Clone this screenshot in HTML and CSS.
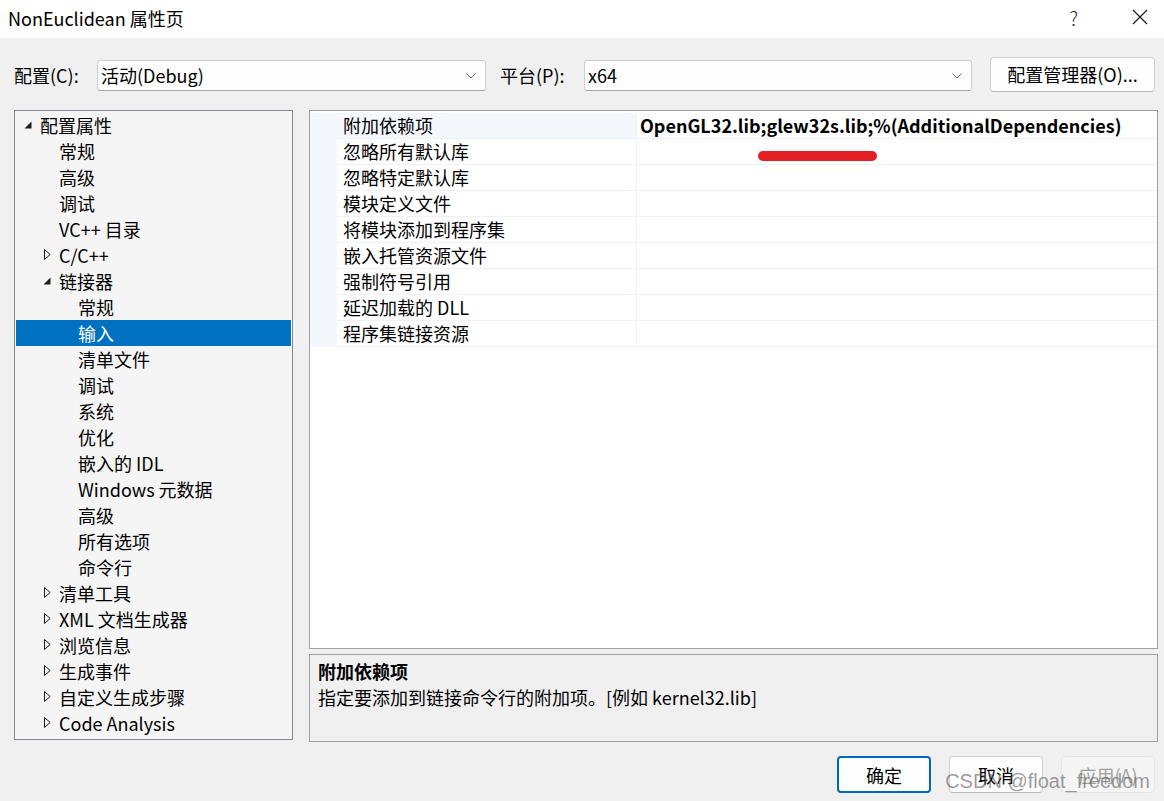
FILE: index.html
```html
<!DOCTYPE html>
<html lang="zh-CN">
<head>
    <meta charset="UTF-8" />
    <meta name="viewport" content="width=device-width, initial-scale=1.0" />
    <title>NonEuclidean 属性页</title>
    <link rel="stylesheet" href="styles.css">
</head>
<body>
    <div class="dialog">
    <!-- TITLE BAR -->
    <div class="titlebar">
        <span class="title">NonEuclidean 属性页</span>
        <div class="title-btns">
        <span class="help">?</span>
        <svg class="close" width="16" height="16" viewBox="0 0 16 16">
            <path d="M1 1 L15 15 M15 1 L1 15" stroke="#1a1a1a" stroke-width="1.2" fill="none" />
        </svg>
        </div>
    </div>

    <!-- CONFIG ROW -->
    <div class="config-row">
        <label class="lbl lbl-config">配置(C):</label>
        <div class="combo combo-config">
        <span>活动(Debug)</span>
        <svg class="chev" width="10" height="6" viewBox="0 0 10 6"><path d="M0.5 0.5 L5 5 L9.5 0.5" stroke="#707070" fill="none" /></svg>
        </div>
        <label class="lbl lbl-platform">平台(P):</label>
        <div class="combo combo-platform">
        <span>x64</span>
        <svg class="chev" width="10" height="6" viewBox="0 0 10 6"><path d="M0.5 0.5 L5 5 L9.5 0.5" stroke="#707070" fill="none" /></svg>
        </div>
        <button class="btn manager">配置管理器(O)...</button>
    </div>

    <!-- MAIN -->
    <div class="main">
        <div class="tree" id="tree"></div>
        <div class="right">
        <div class="grid">
            <div class="grid-rows" id="grid-rows"></div>
            <div class="red-mark"></div>
        </div>
        <div class="desc">
            <div class="desc-title">附加依赖项</div>
            <div class="desc-text">指定要添加到链接命令行的附加项。[例如 kernel32.lib]</div>
        </div>
        </div>
    </div>

    <!-- FOOTER -->
    <div class="footer">
        <button class="btn ok">确定</button>
        <button class="btn">取消</button>
        <button class="btn disabled">应用(A)</button>
        <span class="watermark">CSDN @float_freedom</span>
    </div>
    </div>

    <script>
        // level, arrow (open / closed / none), text
        const treeItems = [
            [0, "open", "配置属性"],
            [1, "", "常规"],
            [1, "", "高级"],
            [1, "", "调试"],
            [1, "", "VC++ 目录"],
            [1, "closed", "C/C++"],
            [1, "open", "链接器"],
            [2, "", "常规"],
            [2, "", "输入", true],
            [2, "", "清单文件"],
            [2, "", "调试"],
            [2, "", "系统"],
            [2, "", "优化"],
            [2, "", "嵌入的 IDL"],
            [2, "", "Windows 元数据"],
            [2, "", "高级"],
            [2, "", "所有选项"],
            [2, "", "命令行"],
            [1, "closed", "清单工具"],
            [1, "closed", "XML 文档生成器"],
            [1, "closed", "浏览信息"],
            [1, "closed", "生成事件"],
            [1, "closed", "自定义生成步骤"],
            [1, "closed", "Code Analysis"],
        ];

        const props = [
            ["附加依赖项", "OpenGL32.lib;glew32s.lib;%(AdditionalDependencies)"],
            ["忽略所有默认库", ""],
            ["忽略特定默认库", ""],
            ["模块定义文件", ""],
            ["将模块添加到程序集", ""],
            ["嵌入托管资源文件", ""],
            ["强制符号引用", ""],
            ["延迟加载的 DLL", ""],
            ["程序集链接资源", ""],
        ];

        const arrows = {
            open: '<svg width="8" height="8" viewBox="0 0 8 8"><path d="M7.5 0.5 L7.5 7.5 L0.5 7.5 Z" fill="#1e1e1e" /></svg>',
            closed: '<svg width="7" height="11" viewBox="0 0 7 11"><path d="M0.5 0.5 L6.2 5.5 L0.5 10.5 Z" fill="none" stroke="#1e1e1e" /></svg>',
        };

        const tree = document.getElementById("tree");
        treeItems.forEach(([level, arrow, text, selected]) => {
            const row = document.createElement("div");
            row.className = "tree-row" + (selected ? " selected" : "");
            row.innerHTML = `
            <span class="indent" style="width:${level * 19}px"></span>
            <span class="arrow">${arrows[arrow] || ""}</span>
            <span class="tree-text">${text}</span>`;
            tree.appendChild(row);
        });

        const gridRows = document.getElementById("grid-rows");
        props.forEach(([name, value], i) => {
            const row = document.createElement("div");
            row.className = "prop-row" + (i === 0 ? " current" : "");
            row.innerHTML = `
            <div class="gutter"></div>
            <div class="prop-name">${name}</div>
            <div class="prop-value">${value}</div>`;
            gridRows.appendChild(row);
        });
    </script>
</body>
</html>
```

FILE: styles.css
```css
body {
    margin: 0;
    padding: 0;
    background: #f0f0f0;
    font-family: "Noto Sans CJK SC", "Noto Sans", sans-serif;
    font-size: 18px;
    color: #000;
}
.dialog {
    width: 1164px;
    height: 801px;
    display: flex;
    flex-direction: column;
    overflow: hidden;
}

/* Title bar */
.titlebar {
    height: 38px;
    background: #fff;
    display: flex;
    align-items: center;
    justify-content: space-between;
    padding: 0 16px 0 8px;
}
.title {
    font-size: 18px;
    line-height: 26px;
    margin-top: -3px;
}
.title-btns {
    display: flex;
    align-items: center;
    gap: 54px;
    margin-top: -4px;
}
.help {
    font-size: 19px;
    font-weight: 300;
    color: #1a1a1a;
}

/* Configuration row */
.config-row {
    display: flex;
    align-items: center;
    height: 36px;
    margin-top: 18px;
    padding-left: 14px;
}
.lbl {
    line-height: 26px;
    margin-top: 2px;
}
.lbl-config {
    width: 83px;
}
.lbl-platform {
    width: 84px;
}
.combo {
    height: 31px;
    margin-top: 2px;
    background: #fdfdfd;
    border: 1px solid #cfcfcf;
    border-bottom-color: #a8a8a8;
    border-radius: 3px;
    display: flex;
    align-items: center;
    justify-content: space-between;
    padding: 0 9px 0 3px;
    box-sizing: border-box;
}
.combo-config {
    width: 389px;
    margin-right: 14px;
}
.combo-platform {
    width: 388px;
    margin-right: 18px;
}
.chev {
    margin-top: 1px;
}
.btn {
    font-family: "Noto Sans CJK SC", "Noto Sans", sans-serif;
    font-size: 18px;
    color: #000;
    background: #fdfdfd;
    border: 1px solid #d0d0d0;
    border-bottom-color: #b8b8b8;
    border-radius: 4px;
    padding: 0;
    cursor: pointer;
}
.manager {
    width: 165px;
    height: 35px;
}

/* Main area */
.main {
    display: flex;
    gap: 16px;
    margin-top: 18px;
    padding-left: 14px;
}
.tree {
    width: 279px;
    height: 630px;
    box-sizing: border-box;
    background: #f5f5f5;
    border: 1px solid #828790;
    padding: 1px;
}
.tree-row {
    display: flex;
    align-items: center;
    height: 26px;
    line-height: 26px;
    white-space: nowrap;
}
.tree-row.selected {
    background: #0070c0;
    color: #fff;
}
.indent {
    flex: none;
}
.arrow {
    width: 24px;
    flex: none;
    display: flex;
    align-items: center;
    justify-content: center;
    margin-top: -1px;
}
.right {
    width: 849px;
    display: flex;
    flex-direction: column;
    gap: 5px;
}

/* Property grid */
.grid {
    position: relative;
    height: 539px;
    box-sizing: border-box;
    background: #fff;
    border: 1px solid #a0a0a0;
    padding-top: 2px;
}
.prop-row {
    display: grid;
    grid-template-columns: 27px 299px 1fr;
    height: 26px;
    line-height: 25px;
}
.gutter {
    background: #f4f7fc;
}
.prop-name {
    padding-left: 6px;
    border-bottom: 1px solid #eef1f7;
}
.prop-value {
    padding-left: 3px;
    font-weight: bold;
    border-left: 1px solid #eef1f7;
    border-bottom: 1px solid #eef1f7;
    white-space: nowrap;
}
.prop-row.current .prop-name {
    background: #f4f7fc;
}
.red-mark {
    position: absolute;
    left: 448px;
    top: 40px;
    width: 119px;
    height: 10px;
    border-radius: 5px;
    background: #e31e24;
}

/* Description */
.desc {
    height: 88px;
    box-sizing: border-box;
    border: 1px solid #a0a0a0;
    padding: 3px 8px;
    line-height: 26px;
}
.desc-title {
    font-weight: bold;
}

/* Footer */
.footer {
    position: relative;
    display: flex;
    justify-content: flex-end;
    gap: 18px;
    margin-top: 14px;
    padding-right: 9px;
}
.footer .btn {
    width: 94px;
    height: 37px;
}
.footer .ok {
    border: 2px solid #0067c0;
}
.footer .disabled {
    background: #f5f5f5;
    border-color: #e5e5e5;
    color: #a0a0a0;
}
.watermark {
    position: absolute;
    right: 14px;
    top: 14px;
    font-family: "Liberation Sans", sans-serif;
    font-size: 20px;
    color: rgba(90, 90, 90, 0.6);
    pointer-events: none;
}
```
